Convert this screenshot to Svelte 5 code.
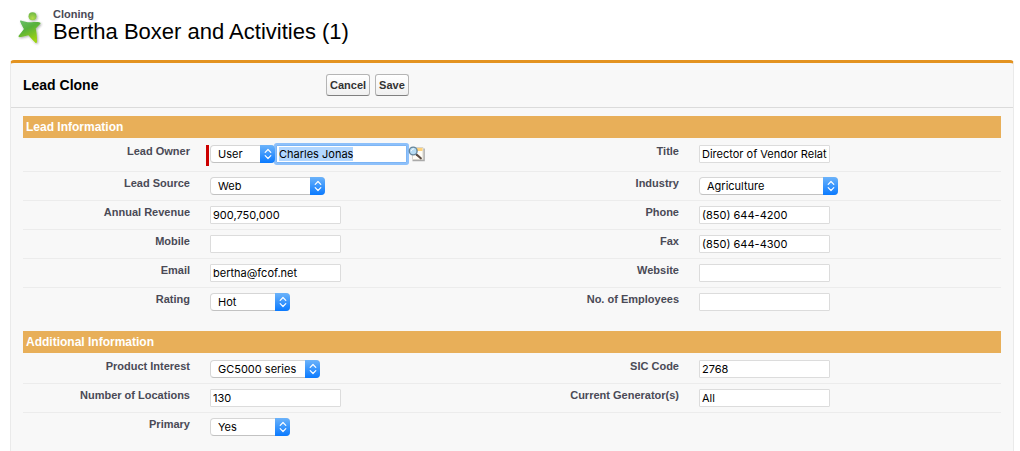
<script>
  import { onMount } from 'svelte';

  let ownerInput;

  const sections = [
    {
      title: 'Lead Information',
      rows: [
        [
          { id: 'owner', label: 'Lead Owner', type: 'owner', value: 'Charles Jonas' },
          { id: 'title', label: 'Title', value: 'Director of Vendor Relations' }
        ],
        [
          { id: 'source', label: 'Lead Source', type: 'select', value: 'Web', width: 115 },
          { id: 'industry', label: 'Industry', type: 'select', value: 'Agriculture', width: 139 }
        ],
        [
          { id: 'revenue', label: 'Annual Revenue', value: '900,750,000' },
          { id: 'phone', label: 'Phone', value: '(850) 644-4200' }
        ],
        [
          { id: 'mobile', label: 'Mobile', value: '' },
          { id: 'fax', label: 'Fax', value: '(850) 644-4300' }
        ],
        [
          { id: 'email', label: 'Email', value: 'bertha@fcof.net' },
          { id: 'website', label: 'Website', value: '' }
        ],
        [
          { id: 'rating', label: 'Rating', type: 'select', value: 'Hot', width: 80 },
          { id: 'employees', label: 'No. of Employees', value: '' }
        ]
      ]
    },
    {
      title: 'Additional Information',
      rows: [
        [
          { id: 'product', label: 'Product Interest', type: 'select', value: 'GC5000 series', width: 110 },
          { id: 'sic', label: 'SIC Code', value: '2768' }
        ],
        [
          { id: 'locations', label: 'Number of Locations', value: '130' },
          { id: 'generators', label: 'Current Generator(s)', value: 'All' }
        ],
        [{ id: 'primary', label: 'Primary', type: 'select', value: 'Yes', width: 80 }]
      ]
    }
  ];

  onMount(() => {
    ownerInput?.focus({ preventScroll: true });
    ownerInput?.select();
  });
</script>

{#snippet dropdown(id, value, width, name)}
  <span class="select" style="width: {width}px">
    <select {id} aria-label={name}><option>{value}</option></select>
    <span class="arrows">
      <svg width="8" height="12" viewBox="0 0 8 12" fill="none" stroke="#fff" stroke-width="1.2" stroke-linecap="round" stroke-linejoin="round">
        <path d="M1.200 4.300 4 1.500l2.800 2.800M1.200 7.700 4 10.500l2.800-2.800" />
      </svg>
    </span>
  </span>
{/snippet}

<div class="page">
  <header class="heading">
    <svg class="logo" width="28" height="36" viewBox="0 0 28 36" aria-hidden="true">
      <defs>
        <linearGradient id="body" x1="0" y1="0" x2="0.5" y2="1">
          <stop offset="0" stop-color="#6cc070" />
          <stop offset="0.45" stop-color="#58b13c" />
          <stop offset="1" stop-color="#9ed312" />
        </linearGradient>
        <radialGradient id="head" cx="0.5" cy="0.75" r="0.7">
          <stop offset="0" stop-color="#b4dc48" />
          <stop offset="1" stop-color="#6fb845" />
        </radialGradient>
        <filter id="shade" x="-20%" y="-20%" width="150%" height="150%">
          <feDropShadow dx="1" dy="1" stdDeviation="0.8" flood-color="#333" flood-opacity="0.4" />
        </filter>
      </defs>
      <g filter="url(#shade)">
        <path d="M4 9.500c4 1.600 7.500 2 10.500 1.700 3.200-.2 6.500-.3 8.300.2 1 .3.900 1.200.1 1.900l-4.200 4.300c1 4.400 1.500 9 1.300 13.400-.2 1.300-1.200 1.300-1.900.5-2.200-2.200-4.500-4.900-6.700-7.200-2.700.7-5.300 1.500-8.600 1.900-1.200 0-1.700-.8-1-1.700 1.800-2.200 3.600-4.300 5.100-6.500C5.400 15.300 4 12.800 3.100 10.600 2.900 9.700 3.300 9.300 4 9.500z" fill="url(#body)" />
        <circle cx="15.500" cy="5.200" r="4" fill="url(#head)" />
      </g>
    </svg>
    <div>
      <p class="kind">Cloning</p>
      <h1>Bertha Boxer and Activities (1)</h1>
    </div>
  </header>

  <form class="card" onsubmit={(e) => e.preventDefault()}>
    <div class="toolbar">
      <h2>Lead Clone</h2>
      <button type="button">Cancel</button>
      <button type="submit">Save</button>
    </div>

    <div class="content">
      {#each sections as section}
        <section>
          <h3>{section.title}</h3>
          {#each section.rows as row}
            <div class="row">
              {#each row as field}
                <div class="field">
                  <label for={field.id}>{field.label}</label>
                  {#if field.type === 'owner'}
                    <div class="owner">
                      {@render dropdown('owner-type', 'User', 65, 'Owner type')}
                      <input id={field.id} class="active" value={field.value} bind:this={ownerInput} />
                      <button type="button" class="lookup" aria-label="Lead Owner Lookup">
                        <svg width="18" height="16" viewBox="0 0 18 16" aria-hidden="true">
                          <path d="M4.500 14.500h11.500v-12" fill="none" stroke="#aaa" stroke-width="1.600" />
                          <path d="M4.500 1.500h10.500v12h-10.500z" fill="#fffdf6" stroke="#d8d5cc" />
                          <path d="M9 2h5.500v3H9z" fill="#ffd27a" />
                          <path d="m8.500 8.500 4.300 3.800" stroke="#5c4c42" stroke-width="2.200" stroke-linecap="round" />
                          <circle cx="5.200" cy="5" r="3.900" fill="#b7dcf3" stroke="#66859a" stroke-width="1.400" />
                          <path d="M3.300 4.800c.3-1.200 1-1.800 2.200-1.900" fill="none" stroke="#fff" stroke-linecap="round" />
                        </svg>
                      </button>
                    </div>
                  {:else if field.type === 'select'}
                    {@render dropdown(field.id, field.value, field.width)}
                  {:else}
                    <input id={field.id} value={field.value} />
                  {/if}
                </div>
              {/each}
            </div>
          {/each}
        </section>
      {/each}
    </div>
  </form>
</div>

<style>
  :global(body) {
    background: #fff;
  }
  * {
    box-sizing: border-box;
  }
  .page {
    display: flex;
    flex-direction: column;
    min-height: 100vh;
    padding: 8px 6px 0 10px;
    font-family: 'Liberation Sans', Arial, sans-serif;
    color: #000;
  }
  .heading {
    display: flex;
    gap: 8px;
    height: 52px;
    padding-left: 7px;
  }
  .logo {
    margin-top: 3px;
  }
  p,
  h1,
  h2,
  h3 {
    margin: 0;
  }
  .kind {
    font-size: 11px;
    font-weight: bold;
    line-height: 12px;
    color: #4a4a56;
  }
  h1 {
    font-size: 22px;
    font-weight: normal;
    line-height: 24px;
  }
  .card {
    flex: 1;
    background: #f8f8f8;
    border: 1px solid #eaeaea;
    border-top: 3px solid #e39321;
    border-bottom: 0;
    border-radius: 4px 4px 0 0;
  }
  .toolbar {
    display: flex;
    align-items: center;
    gap: 5px;
    height: 45px;
    padding-left: 12px;
    border-bottom: 1px solid #dbdbdb;
  }
  h2 {
    width: 298px;
    font-size: 14px;
    line-height: 16px;
  }
  .toolbar button {
    height: 22px;
    padding: 0 3px;
    border: 1px solid #b5b5b5;
    border-bottom-color: #7f7f7f;
    border-radius: 3px;
    background: linear-gradient(#fff, #f0f0f0);
    font: bold 11px 'Liberation Sans', Arial, sans-serif;
    color: #333;
  }
  .content {
    padding: 8px 12px 0;
  }
  section {
    padding-bottom: 15px;
  }
  h3 {
    padding-left: 3px;
    background: #e8af59;
    font-size: 12px;
    line-height: 22px;
    color: #fff;
  }
  .row {
    display: grid;
    grid-template-columns: 1fr 1fr;
    padding: 5px 0;
    border-bottom: 1px solid #ececec;
  }
  h3 + .row {
    padding-top: 7px;
  }
  .row:last-child {
    border-bottom: 0;
  }
  .field {
    display: grid;
    grid-template-columns: 167px 1fr;
    column-gap: 20px;
    align-items: start;
  }
  label {
    font-size: 11px;
    font-weight: bold;
    line-height: 12px;
    text-align: right;
    color: #4a4a56;
  }
  input {
    width: 131px;
    height: 18px;
    padding: 0 2px;
    border: 1px solid #dcdcdc;
    border-radius: 1px;
    background: #fff;
    font: 11px Inter, sans-serif;
    color: #000;
    outline: none;
  }
  input::selection {
    background: #b3d7ff;
    color: #000;
  }
  .select {
    position: relative;
    display: block;
    height: 18px;
  }
  select {
    appearance: none;
    display: block;
    width: 100%;
    height: 18px;
    padding: 0 16px 0 7px;
    border: 1px solid #d6d6d6;
    border-bottom-color: #c2c2c2;
    border-radius: 4px;
    background: #fff;
    font: 11px Inter, sans-serif;
    color: #000;
    outline: none;
  }
  .arrows {
    position: absolute;
    top: 0;
    right: 0;
    display: grid;
    place-items: center;
    width: 15px;
    height: 18px;
    border-radius: 0 4px 4px 0;
    background: linear-gradient(#6cb3fa, #0a7aff);
    pointer-events: none;
  }
  .owner {
    display: flex;
    height: 21px;
    margin-left: -4px;
    padding-left: 1px;
    border-left: 3px solid #c00;
  }
  .active {
    margin-left: 1px;
    border-color: #7db5f5;
    line-height: 14px;
    box-shadow: 0 0 0 2px #8dc0fa;
  }
  .lookup {
    width: 18px;
    height: 16px;
    margin: 1px 0 0 1px;
    padding: 0;
    border: 0;
    background: none;
  }
</style>
